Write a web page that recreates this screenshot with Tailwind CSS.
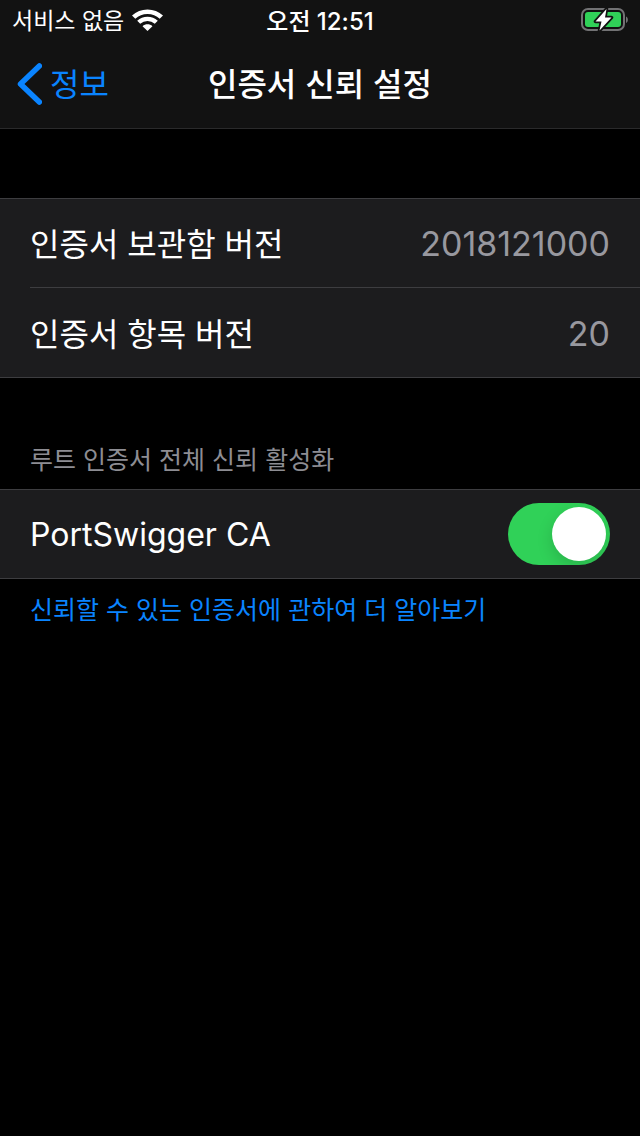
<!DOCTYPE html>
<html lang="ko">
<head>
<meta charset="utf-8">
<meta name="viewport" content="width=device-width, initial-scale=1">
<title>인증서 신뢰 설정</title>
<script src="https://cdn.jsdelivr.net/npm/@tailwindcss/browser@4"></script>
</head>
<body class="min-h-screen bg-black text-white font-['Noto_Sans_CJK_KR',sans-serif]">
<header class="border-b border-[#2a2a2b] bg-[#121212]">
  <div class="grid h-10 grid-cols-[1fr_auto_1fr] items-center pr-3 pl-3">
    <div class="flex items-center gap-2 text-[23px] leading-10">
      <span class="pb-[2px] leading-[38px]">서비스 없음</span>
      <svg class="h-[22px] w-[31px]" viewBox="0 0 30 22" preserveAspectRatio="none" fill="none" aria-label="Wi-Fi" role="img">
        <path d="M1.6 8.1C9 .9 21 .9 28.4 8.1" stroke="#fff" stroke-width="4.6"/>
        <path d="M6.5 13.3C11.3 8.7 18.7 8.7 23.5 13.3" stroke="#fff" stroke-width="4.2"/>
        <path d="M10.2 17.2C12.9 14.7 17.1 14.7 19.8 17.2L15 22Z" fill="#fff"/>
      </svg>
    </div>
    <div class="pt-1 font-['Inter','Noto_Sans_CJK_KR',sans-serif] text-[24px] leading-9 font-medium">오전 12:51</div>
    <svg class="h-6 w-12 justify-self-end" viewBox="0 0 48 24" role="img" aria-label="배터리 충전 중">
      <rect x="2" y="1" width="42" height="21" rx="6" fill="none" stroke="#727274" stroke-width="2"/>
      <path d="M46 8.5C48.5 9.5 48.5 14 46 15Z" fill="#727274"/>
      <rect x="5" y="4" width="36" height="15" rx="3" fill="#30d158"/>
      <path d="M26.5 1L15.5 13.5H21.5L19.5 22.500L31.500 9.500H25Z" fill="#fff" stroke="#121212" stroke-width="3.5" stroke-linejoin="round" paint-order="stroke"/>
    </svg>
  </div>
  <nav class="grid h-[88px] grid-cols-[1fr_auto_1fr] items-center px-4">
    <a href="#" class="flex items-center gap-2 text-[32px] text-[#0a84ff]">
      <svg class="h-[42px] w-[26px]" viewBox="0 0 26 42" fill="none" stroke="currentColor" stroke-width="5.5" stroke-linecap="round" stroke-linejoin="round" aria-hidden="true"><path d="M23.3 3L4.5 21L23.3 39"/></svg>
      <span class="pb-1 leading-[84px]">정보</span>
    </a>
    <h1 class="pb-1 text-[32px] leading-[84px] font-medium">인증서 신뢰 설정</h1>
  </nav>
</header>
<main class="pt-[69px]">
  <dl class="border-y border-[#3d3d40] bg-[#1c1c1e] pl-[30px] text-[32px]">
    <div class="flex justify-between border-b border-[#3d3d40] pr-[30px]">
      <dt class="pb-[2px] leading-[86px]">인증서 보관함 버전</dt>
      <dd class="pt-[2px] font-['Inter',sans-serif] text-[34px] leading-[86px] text-[#98989f]">2018121000</dd>
    </div>
    <div class="flex justify-between pt-px pr-[30px]">
      <dt class="pb-[2px] leading-[86px]">인증서 항목 버전</dt>
      <dd class="pt-[2px] font-['Inter',sans-serif] text-[34px] leading-[86px] text-[#98989f]">20</dd>
    </div>
  </dl>
  <section class="pt-[65px]">
    <h2 class="px-[30px] pb-3 font-['Inter','Noto_Sans_CJK_KR',sans-serif] text-[25px] leading-[34px] text-[#8d8d93]">루트 인증서 전체 신뢰 활성화</h2>
    <div class="flex h-[90px] items-center justify-between border-y border-[#3d3d40] bg-[#1c1c1e] px-[30px]">
      <label for="trust" class="pt-[2px] font-['Inter',sans-serif] text-[32px] leading-[86px]">PortSwigger CA</label>
      <input id="trust" type="checkbox" role="switch" checked class="flex h-[62px] w-[102px] appearance-none items-center overflow-hidden rounded-full bg-[#39393d] p-1 before:size-[54px] before:rounded-full before:bg-white before:shadow-[0_6px_16px_rgba(0,0,0,0.15)] before:content-[''] checked:justify-end checked:bg-[#30d158]">
    </div>
    <a href="#" class="block px-[30px] pt-[14px] font-['Inter','Noto_Sans_CJK_KR',sans-serif] text-[25px] leading-[34px] text-[#0a84ff]">신뢰할 수 있는 인증서에 관하여 더 알아보기</a>
  </section>
</main>
</body>
</html>
